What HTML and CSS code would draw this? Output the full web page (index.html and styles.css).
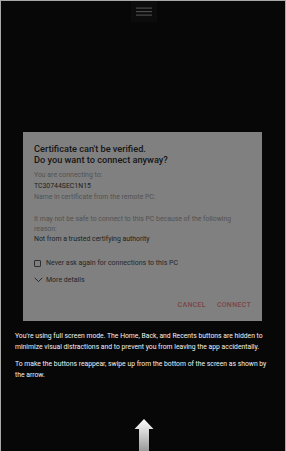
FILE: index.html
```html
<!DOCTYPE html>
<html>
<head>
<meta charset="utf-8">
<link rel="stylesheet" href="styles.css">
</head>
<body>
<div class="screen">
  <div class="topbar">
    <div class="handle">
      <svg width="16" height="10" viewBox="0 0 16 10"><rect x="0" y="0.5" width="16" height="1.2" fill="#4a4a4a"/><rect x="0" y="4" width="16" height="1.2" fill="#4a4a4a"/><rect x="0" y="7.5" width="16" height="1.2" fill="#4a4a4a"/></svg>
    </div>
  </div>
  <div class="dialog">
    <div class="title">Certificate can't be verified.<br>Do you want to connect anyway?</div>
    <div class="label">You are connecting to:</div>
    <div class="value host">TC30744SEC1N15</div>
    <div class="label">Name in certificate from the remote PC:</div>
    <div class="blank"></div>
    <div class="label reason">It may not be safe to connect to this PC because of the following reason:</div>
    <div class="value">Not from a trusted certifying authority</div>
    <div class="check-row"><span class="box"></span><span>Never ask again for connections to this PC</span></div>
    <div class="more-row"><svg width="9" height="6" viewBox="0 0 9 6"><path d="M0.7 0.8 L4.5 4.6 L8.3 0.8" fill="none" stroke="#2a2a2a" stroke-width="1"/></svg><span>More details</span></div>
    <div class="actions"><span>CANCEL</span><span>CONNECT</span></div>
  </div>
  <div class="info">
    <p>You're using full screen mode. The Home, Back, and Recents buttons are hidden to minimize visual distractions and to prevent you from leaving the app accidentally.</p>
    <p>To make the buttons reappear, swipe up from the bottom of the screen as shown by the arrow.</p>
  </div>
  <div class="arrow">
    <svg width="20" height="32" viewBox="0 0 20 32">
      <defs><linearGradient id="g" x1="0" y1="0" x2="0" y2="1"><stop offset="0" stop-color="#ffffff"/><stop offset="1" stop-color="#9a9a9a"/></linearGradient></defs>
      <path d="M10 0 L19.5 10 L15 10 L15 32 L5 32 L5 10 L0.5 10 Z" fill="url(#g)"/>
    </svg>
  </div>
</div>
</body>
</html>
```
FILE: styles.css
```css
html, body { margin: 0; padding: 0; background: #070707; }
.screen {
  box-sizing: border-box;
  width: 286px;
  height: 451px;
  border: 1px solid #a8a8a8;
  border-bottom: none;
  background: #070707;
  display: flex;
  flex-direction: column;
  font-family: Roboto, "Liberation Sans", sans-serif;
  overflow: hidden;
}
.topbar { height: 21px; display: flex; justify-content: center; }
.handle {
  width: 26px; height: 21px;
  background: #0c0c0c;
  display: flex; align-items: center; justify-content: center;
  margin-left: 1px;
}
.handle svg { display: block; }
.dialog {
  margin: 110px 0 0 22px;
  width: 239px;
  height: 189px;
  box-sizing: border-box;
  background: #808080;
  padding: 12px 10px 0 11px;
  color: #1c1c1c;
  display: flex;
  flex-direction: column;
}
.title { font-size: 9.2px; font-weight: 500; line-height: 10.5px; color: #151515; margin-bottom: 5px; }
.label { font-size: 6.9px; line-height: 10px; color: #525252; }
.value { font-size: 6.9px; line-height: 10px; color: #1e1e1e; }
.reason { line-height: 9.5px; }
.host { margin-top: 1px; margin-bottom: 1px; }
.blank { height: 13px; }
.check-row { display: flex; align-items: center; gap: 5px; font-size: 7px; color: #262626; margin-top: 14px; height: 10px; }
.box { width: 7px; height: 7px; border: 1px solid #2e2e2e; border-radius: 1px; box-sizing: border-box; }
.more-row { display: flex; align-items: center; gap: 3px; font-size: 7px; color: #262626; margin-top: 7px; height: 10px; }
.more-row svg { display: block; }
.actions { display: flex; justify-content: flex-end; gap: 11px; font-size: 7px; font-weight: 500; letter-spacing: 0.3px; color: #7a4646; margin-top: 16px; padding-right: 1px; }
.info { padding: 10px 12px 0 14px; color: #f2f2f2; font-size: 6.8px; line-height: 11px; }
.info p { margin: 0 0 6px 0; }
.arrow { margin-top: auto; display: flex; justify-content: center; margin-left: 1px; }
.arrow svg { display: block; }
```
